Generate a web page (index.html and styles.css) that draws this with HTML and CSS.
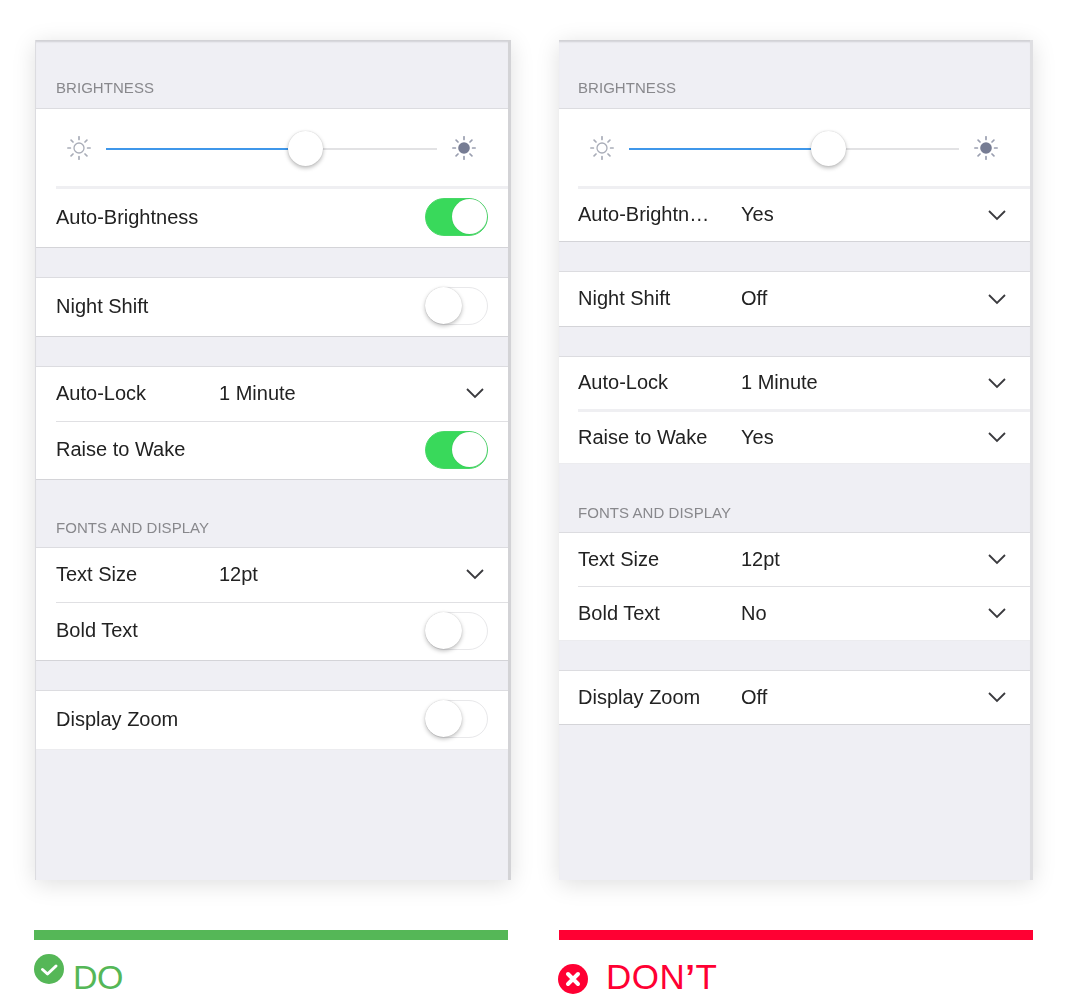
FILE: index.html
```html
<!DOCTYPE html>
<html lang="en">
<head>
<meta charset="utf-8">
<title>Do and don't</title>
<link rel="stylesheet" href="styles.css">
</head>
<body>
<svg class="defs" width="0" height="0" aria-hidden="true">
  <defs>
    <g id="rays" stroke-width="1.7" stroke-linecap="round">
      <path d="M12 .8v2.600M12 20.600v2.600M.8 12h2.600M20.600 12h2.600M4.100 4.100l1.900 1.900M18 18l1.900 1.900M4.100 19.900l1.900-1.900M18 6l1.900-1.900"/>
    </g>
  </defs>
</svg>
<main class="compare">
  <section class="column">
    <div class="phone phone-do">
      <div class="phone-inner">
        <h2 class="section-label label-first">BRIGHTNESS</h2>
        <div class="group">
          <div class="slider-row">
            <svg class="sun" viewBox="0 0 24 24"><use href="#rays" stroke="#a9adb8"/><circle cx="12" cy="12" r="5" fill="none" stroke="#a9adb8" stroke-width="1.3"/></svg>
            <div class="track"><span class="track-on"></span><span class="thumb"></span></div>
            <svg class="sun" viewBox="0 0 24 24"><use href="#rays" stroke="#9a9fb0"/><circle cx="12" cy="12" r="5.8" fill="#767c93"/></svg>
          </div>
          <div class="sep sep-thick"></div>
          <div class="row row-58"><span class="row-label">Auto-Brightness</span><span class="switch on"></span></div>
        </div>
        <div class="gap"></div>
        <div class="group">
          <div class="row row-58"><span class="row-label">Night Shift</span><span class="switch"></span></div>
        </div>
        <div class="gap"></div>
        <div class="group">
          <div class="row row-54"><span class="row-label col-label">Auto-Lock</span><span class="row-value">1 Minute</span><svg class="chev" viewBox="0 0 20 12"><path d="M2 2l8 8 8-8"/></svg></div>
          <div class="sep"></div>
          <div class="row row-57"><span class="row-label">Raise to Wake</span><span class="switch on"></span></div>
        </div>
        <h2 class="section-label label-fonts">FONTS AND DISPLAY</h2>
        <div class="group">
          <div class="row row-54"><span class="row-label col-label">Text Size</span><span class="row-value">12pt</span><svg class="chev" viewBox="0 0 20 12"><path d="M2 2l8 8 8-8"/></svg></div>
          <div class="sep"></div>
          <div class="row row-57"><span class="row-label">Bold Text</span><span class="switch"></span></div>
        </div>
        <div class="gap"></div>
        <div class="group group-soft">
          <div class="row row-58"><span class="row-label">Display Zoom</span><span class="switch"></span></div>
        </div>
      </div>
    </div>
    <div class="bar bar-do"></div>
    <div class="verdict verdict-do">
      <svg class="badge badge-do" viewBox="0 0 30 30"><circle cx="15" cy="15" r="15" fill="#55b757"/><path d="M8.500 15.500l5 4.500 8.500-8" fill="none" stroke="#fff" stroke-width="3" stroke-linecap="round" stroke-linejoin="round"/></svg>
      <span>DO</span>
    </div>
  </section>

  <section class="column">
    <div class="phone phone-dont">
      <div class="phone-inner">
        <h2 class="section-label label-first">BRIGHTNESS</h2>
        <div class="group">
          <div class="slider-row">
            <svg class="sun" viewBox="0 0 24 24"><use href="#rays" stroke="#a9adb8"/><circle cx="12" cy="12" r="5" fill="none" stroke="#a9adb8" stroke-width="1.3"/></svg>
            <div class="track"><span class="track-on"></span><span class="thumb"></span></div>
            <svg class="sun" viewBox="0 0 24 24"><use href="#rays" stroke="#9a9fb0"/><circle cx="12" cy="12" r="5.8" fill="#767c93"/></svg>
          </div>
          <div class="sep sep-thick"></div>
          <div class="row row-52"><span class="row-label col-label">Auto-Brightn…</span><span class="row-value">Yes</span><svg class="chev" viewBox="0 0 20 12"><path d="M2 2l8 8 8-8"/></svg></div>
        </div>
        <div class="gap"></div>
        <div class="group">
          <div class="row row-54"><span class="row-label col-label">Night Shift</span><span class="row-value">Off</span><svg class="chev" viewBox="0 0 20 12"><path d="M2 2l8 8 8-8"/></svg></div>
        </div>
        <div class="gap"></div>
        <div class="group group-soft">
          <div class="row row-52"><span class="row-label col-label">Auto-Lock</span><span class="row-value">1 Minute</span><svg class="chev" viewBox="0 0 20 12"><path d="M2 2l8 8 8-8"/></svg></div>
          <div class="sep sep-thick"></div>
          <div class="row row-51"><span class="row-label col-label">Raise to Wake</span><span class="row-value">Yes</span><svg class="chev" viewBox="0 0 20 12"><path d="M2 2l8 8 8-8"/></svg></div>
        </div>
        <h2 class="section-label label-fonts-dont">FONTS AND DISPLAY</h2>
        <div class="group group-soft">
          <div class="row row-53"><span class="row-label col-label">Text Size</span><span class="row-value">12pt</span><svg class="chev" viewBox="0 0 20 12"><path d="M2 2l8 8 8-8"/></svg></div>
          <div class="sep"></div>
          <div class="row row-53"><span class="row-label col-label">Bold Text</span><span class="row-value">No</span><svg class="chev" viewBox="0 0 20 12"><path d="M2 2l8 8 8-8"/></svg></div>
        </div>
        <div class="gap"></div>
        <div class="group">
          <div class="row row-53"><span class="row-label col-label">Display Zoom</span><span class="row-value">Off</span><svg class="chev" viewBox="0 0 20 12"><path d="M2 2l8 8 8-8"/></svg></div>
        </div>
      </div>
    </div>
    <div class="bar bar-dont"></div>
    <div class="verdict verdict-dont">
      <svg class="badge badge-dont" viewBox="0 0 30 30"><circle cx="15" cy="15" r="15" fill="#ff0033"/><path d="M10 10l10 10M20 10l-10 10" fill="none" stroke="#fff" stroke-width="4" stroke-linecap="round"/></svg>
      <span>DON<span class="apos">’</span>T</span>
    </div>
  </section>
</main>
</body>
</html>
```
FILE: styles.css
```css
* { box-sizing: border-box; }
html, body { margin: 0; padding: 0; background: #fff; }
body { font-family: "Liberation Sans", Arial, sans-serif; width: 1069px; height: 1002px; overflow: hidden; }
.defs { position: absolute; }
.compare { display: flex; gap: 51px; padding: 40px 0 0 34px; }
.column { width: 474px; display: flex; flex-direction: column; }
.phone { height: 840px; background: #efeff4; box-shadow: 0 4px 22px rgba(0,0,0,.13); position: relative; }
.phone-do { width: 476px; margin-left: 1px; margin-right: -3px; }
.phone-inner { height: 100%; filter: blur(.6px); padding-top: 3px; box-shadow: inset 0 3px 2px -1px rgba(0,0,0,.13); border-right: 3px solid #dfdfe2; }
.phone-do .phone-inner { border-right-color: #d3d3d6; border-left: 1px solid #dcdce0; }
.section-label { margin: 0; font-size: 15px; line-height: 16px; font-weight: 400; color: #88888c; letter-spacing: .05px; padding-left: 20px; height: 20px; }
.phone-dont .section-label { padding-left: 19px; }
.label-first { margin-top: 37px; height: 28px; }
.label-fonts { margin-top: 40px; height: 27px; }
.label-fonts-dont { margin-top: 41px; height: 27px; }
.group { background: #fff; border-top: 1px solid #dcdce0; border-bottom: 1px solid #d4d4d8; }
.group-soft { border-bottom-color: #ececef; }
.slider-row { height: 77px; display: flex; align-items: center; padding: 2px 32px 0 31px; gap: 15px; }
.sun { width: 24px; height: 24px; flex: none; position: relative; top: -1px; }
.track { flex: 1; height: 2px; background: #e2e2e4; position: relative; }
.track-on { position: absolute; left: 0; top: 0; bottom: 0; width: 55%; background: #3f97ea; }
.thumb { position: absolute; left: 55%; top: -17px; width: 35px; height: 35px; border-radius: 50%; background: #fff; box-shadow: 0 2px 4px rgba(0,0,0,.28), 0 0 1px rgba(0,0,0,.2); }
.sep { height: 1px; margin-left: 20px; background: #e0e0e3; }
.phone-dont .sep { margin-left: 19px; }
.sep-thick { height: 3px; background: #efeff2; }
.row { display: flex; align-items: center; padding: 0 20px 2px 20px; font-size: 20px; color: #222; }
.phone-dont .row { padding: 0 20px 1px 19px; }
.row-51 { height: 51px; }
.row-52 { height: 52px; }
.row-53 { height: 53px; }
.row-54 { height: 54px; }
.row-57 { height: 57px; }
.row-58 { height: 58px; }
.row-label { flex: 1; white-space: nowrap; }
.col-label { flex: none; width: 163px; }
.row-value { flex: 1; }
.chev { width: 20px; height: 12px; flex: none; margin-right: 3px; }
.chev path { fill: none; stroke: #3a3a3e; stroke-width: 1.8; }
.switch { width: 63px; height: 38px; border-radius: 19px; background: #fff; border: 1.5px solid #e8e8ea; position: relative; flex: none; }
.switch::after { content: ""; position: absolute; left: -1px; top: -1px; width: 37px; height: 37px; border-radius: 50%; background: #fff; box-shadow: 0 2px 4px rgba(0,0,0,.25), 0 0 1px rgba(0,0,0,.2); }
.switch.on { background: linear-gradient(90deg, #39d95b 70%, #6fdc85); border-color: #48d867; }
.switch.on::after { left: auto; right: 0; top: 0; width: 35px; height: 35px; box-shadow: 0 0 1px rgba(0,0,0,.2); }
.gap { height: 29px; }
.bar { height: 10px; margin-top: 50px; }
.bar-do { background: #55b757; }
.bar-dont { background: #ff0033; }
.verdict { display: flex; font-size: 35px; line-height: 40px; position: relative; height: 50px; }
.verdict-do { color: #55b757; font-size: 34px; padding-top: 17px; padding-left: 39px; letter-spacing: -.5px; }
.verdict-dont { color: #ff0033; padding-top: 17px; padding-left: 47px; letter-spacing: .5px; }
.apos { font-weight: 700; }
.badge { position: absolute; width: 30px; height: 30px; }
.badge-do { left: 0; top: 14px; }
.badge-dont { left: -1px; top: 24px; }
```
